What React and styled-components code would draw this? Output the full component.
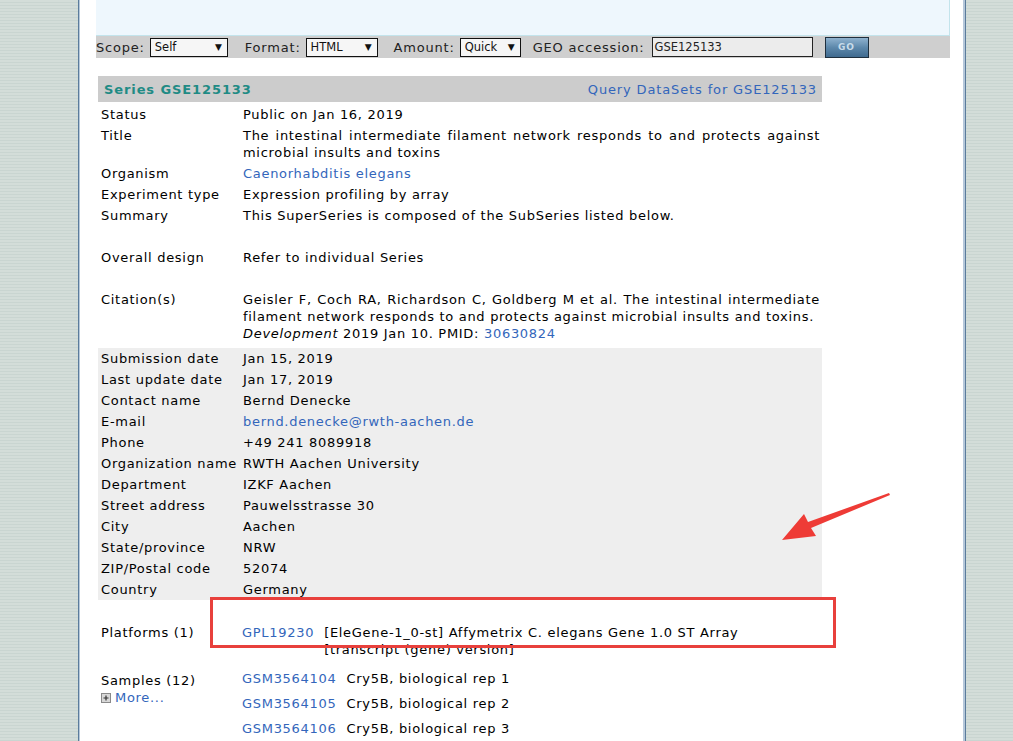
import React from 'react';
import styled, { createGlobalStyle } from 'styled-components';

const GlobalStyle = createGlobalStyle`
  html, body {
    margin: 0;
    padding: 0;
  }
  body {
    background: repeating-linear-gradient(
      to bottom,
      #d3ddd9 0px,
      #d3ddd9 2px,
      #c9d5d1 2px,
      #c9d5d1 3px
    );
    font-family: 'DejaVu Sans', Verdana, sans-serif;
    color: #000;
    overflow: hidden;
  }
`;

const Page = styled.div`
  position: relative;
  display: flex;
  height: 741px;
  padding-left: 78px;
`;

const Main = styled.div`
  width: 869px;
  background: #fff;
  border-left: 1px solid #5b7c9c;
  border-right: 1px solid #5b7c9c;
  box-shadow: inset 1px 0 #b6c8da, inset -2px 0 #b6c8da;
  padding-left: 17px;
`;

const SearchBox = styled.div`
  width: 854px;
  height: 36px;
  background: #eef7fd;
  border-right: 1px solid #c3e4ec;
  border-bottom: 1px solid #c3e4ec;
  box-sizing: border-box;
`;

const Toolbar = styled.div`
  display: flex;
  align-items: center;
  width: 854px;
  height: 22px;
  background: #cfcfcf;
  font-size: 13px;
  letter-spacing: 0.8px;
  color: #222;
`;

const Label = styled.span`
  margin-left: ${p => p.$gap || 0}px;
  margin-right: ${p => p.$after || 5}px;
  white-space: nowrap;
`;

const Select = styled.div`
  display: flex;
  justify-content: space-between;
  align-items: center;
  box-sizing: border-box;
  width: ${p => p.$w}px;
  height: 19px;
  border: 1px solid #111;
  background: #f6f6f6;
  font-family: Tahoma, 'DejaVu Sans', sans-serif;
  font-size: 11.5px;
  letter-spacing: 0;
  padding: 0 5px 0 4px;
  color: #111;
  span:last-child {
    font-size: 9px;
  }
`;

const Input = styled.div`
  box-sizing: border-box;
  width: 161px;
  height: 20px;
  border: 1px solid #222;
  background: #ececec;
  font-size: 11.5px;
  letter-spacing: 0;
  line-height: 18px;
  padding-left: 2px;
`;

const GoButton = styled.div`
  margin-left: 12px;
  width: 44px;
  height: 21px;
  box-sizing: border-box;
  border: 1px solid #1e2f3e;
  background: linear-gradient(to bottom, #8fb2cf 0%, #5d88ab 50%, #3f6a8f 100%);
  color: #c9dcea;
  font-weight: bold;
  font-size: 9px;
  letter-spacing: 1px;
  display: flex;
  align-items: center;
  justify-content: center;
`;

const Content = styled.div`
  width: 724px;
  margin: 18px 0 0 2px;
  font-size: 13px;
  line-height: 17px;
  letter-spacing: 0.7px;
`;

const SeriesHeader = styled.div`
  display: flex;
  justify-content: space-between;
  align-items: center;
  height: 26px;
  background: #cccccc;
  padding: 0 5px 0 6px;
  margin-bottom: 2px;
  letter-spacing: 0.86px;
`;

const SeriesTitle = styled.span`
  font-weight: bold;
  font-size: 13px;
  letter-spacing: 0.9px;
  color: #1f8b85;
`;

const Link = styled.a`
  color: #3366bb;
  text-decoration: none;
`;

const Section = styled.div`
  background: ${p => (p.$gray ? '#eeeeee' : 'transparent')};
  margin-top: ${p => p.$top || 0}px;
`;

const Row = styled.div`
  display: grid;
  grid-template-columns: 142px 1fr;
  padding: 2px 0 2px 3px;
  min-height: 17px;
  margin-bottom: ${p => p.$after || 0}px;
  text-align: justify;
`;

const Key = styled.div`
  white-space: nowrap;
`;

const Val = styled.div`
  padding-right: 2px;
`;

const SubTable = styled.div`
  display: grid;
  grid-template-columns: max-content 1fr;
  column-gap: 10px;
  row-gap: ${p => p.$rowGap || 0}px;
  margin-top: ${p => p.$top || 0}px;
  margin-left: -1px;
  text-align: left;
`;

const MoreLink = styled(Link)`
  display: flex;
  align-items: center;
  gap: 4px;
`;

const RedBox = styled.div`
  position: absolute;
  left: 210px;
  top: 597px;
  width: 626px;
  height: 51px;
  box-sizing: border-box;
  border: 3px solid #e8403c;
`;

const Arrow = styled.svg`
  position: absolute;
  left: 778px;
  top: 488px;
`;

const PlusIcon = () => (
  <svg width="10" height="10" viewBox="0 0 10 10">
    <rect x="0.5" y="0.5" width="9" height="9" fill="#d8d8d8" stroke="#8a8a8a" />
    <path d="M2.5 5h5M5 2.5v5" stroke="#333" strokeWidth="1.2" />
  </svg>
);

const topRows = [
  { k: 'Status', v: 'Public on Jan 16, 2019' },
  {
    k: 'Title',
    v: 'The intestinal intermediate filament network responds to and protects against microbial insults and toxins',
  },
  { k: 'Organism', v: <Link href="#">Caenorhabditis elegans</Link> },
  { k: 'Experiment type', v: 'Expression profiling by array' },
  { k: 'Summary', v: 'This SuperSeries is composed of the SubSeries listed below.', after: 21 },
  { k: 'Overall design', v: 'Refer to individual Series', after: 21 },
  {
    k: 'Citation(s)',
    v: (
      <>
        Geisler F, Coch RA, Richardson C, Goldberg M et al. The intestinal intermediate filament
        network responds to and protects against microbial insults and toxins.
        <br />
        <i>Development</i> 2019 Jan 10. PMID: <Link href="#">30630824</Link>
      </>
    ),
  },
];

const contactRows = [
  ['Submission date', 'Jan 15, 2019'],
  ['Last update date', 'Jan 17, 2019'],
  ['Contact name', 'Bernd Denecke'],
  ['E-mail', <Link href="#">bernd.denecke@rwth-aachen.de</Link>],
  ['Phone', '+49 241 8089918'],
  ['Organization name', 'RWTH Aachen University'],
  ['Department', 'IZKF Aachen'],
  ['Street address', 'Pauwelsstrasse 30'],
  ['City', 'Aachen'],
  ['State/province', 'NRW'],
  ['ZIP/Postal code', '52074'],
  ['Country', 'Germany'],
];

const samples = [
  ['GSM3564104', 'Cry5B, biological rep 1'],
  ['GSM3564105', 'Cry5B, biological rep 2'],
  ['GSM3564106', 'Cry5B, biological rep 3'],
];

export default function App() {
  return (
    <>
      <GlobalStyle />
      <Page>
        <Main>
          <SearchBox />
          <Toolbar>
            <Label>Scope:</Label>
            <Select $w={78}>
              <span>Self</span>
              <span>▼</span>
            </Select>
            <Label $gap={17}>Format:</Label>
            <Select $w={72}>
              <span>HTML</span>
              <span>▼</span>
            </Select>
            <Label $gap={16}>Amount:</Label>
            <Select $w={61}>
              <span>Quick</span>
              <span>▼</span>
            </Select>
            <Label $gap={12} $after={7}>GEO accession:</Label>
            <Input>GSE125133</Input>
            <GoButton>GO</GoButton>
          </Toolbar>

          <Content>
            <SeriesHeader>
              <SeriesTitle>Series GSE125133</SeriesTitle>
              <Link href="#">Query DataSets for GSE125133</Link>
            </SeriesHeader>

            <Section>
              {topRows.map(r => (
                <Row key={r.k} $after={r.after}>
                  <Key>{r.k}</Key>
                  <Val>{r.v}</Val>
                </Row>
              ))}
            </Section>

            <Section $gray $top={4}>
              {contactRows.map(([k, v]) => (
                <Row key={k}>
                  <Key>{k}</Key>
                  <Val>{v}</Val>
                </Row>
              ))}
            </Section>

            <Section $top={22}>
              <Row $after={10}>
                <Key>Platforms (1)</Key>
                <SubTable>
                  <Link href="#">GPL19230</Link>
                  <span>
                    [EleGene-1_0-st] Affymetrix C. elegans Gene 1.0 ST Array
                    <br />
                    [transcript (gene) version]
                  </span>
                </SubTable>
              </Row>
              <Row>
                <Key>
                  Samples (12)
                  <MoreLink href="#">
                    <PlusIcon />
                    More...
                  </MoreLink>
                </Key>
                <SubTable $rowGap={8} $top={-2}>
                  {samples.map(([id, desc]) => (
                    <React.Fragment key={id}>
                      <Link href="#">{id}</Link>
                      <span>{desc}</span>
                    </React.Fragment>
                  ))}
                </SubTable>
              </Row>
            </Section>
          </Content>
        </Main>

        <RedBox />
        <Arrow width="115" height="58" viewBox="0 0 115 58">
          <polygon points="111,5 30,34 26,26 4,52 38,48 33,40 112,7" fill="#ee3b36" />
        </Arrow>
      </Page>
    </>
  );
}
